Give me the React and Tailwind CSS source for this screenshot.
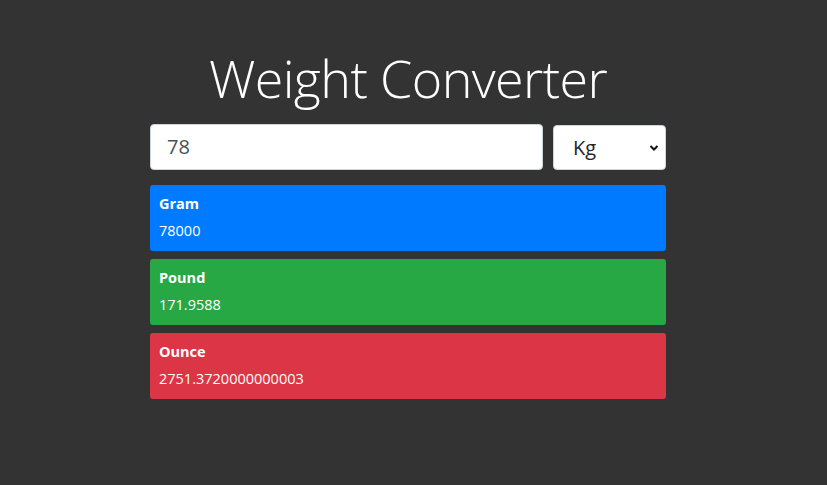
export default function App() {
  const cards = [
    { label: "Gram", value: "78000", bg: "bg-[#007bff]" },
    { label: "Pound", value: "171.9588", bg: "bg-[#28a745]" },
    { label: "Ounce", value: "2751.3720000000003", bg: "bg-[#dc3545]" },
  ];
  return (
    <div className="w-[827px] h-[485px] bg-[#333333] overflow-hidden" style={{ fontFamily: '"Open Sans", "Noto Sans", sans-serif' }}>
      <div className="w-[516px] ml-[150px] pt-[44px] flex flex-col">
        <h1 className="text-center text-white font-light text-[52px] leading-[68px] tracking-[-0.6px] h-[68px]">Weight Converter</h1>
        <div className="mt-[12px] flex gap-[10px] h-[46px]">
          <div className="flex-1 bg-white rounded-[4px] border border-[#ced4da] flex items-center pl-[16px] text-[20px] text-[#495057]">78</div>
          <div className="w-[113px] mt-[1px] bg-white rounded-[4px] border border-[#ced4da] flex items-center pl-[19px] pr-[6px] text-[20px] text-[#212529]">
            <span className="flex-1">Kg</span>
            <svg width="10" height="8" viewBox="0 0 10 8" className="mt-[1px]">
              <path d="M1.5 2 L5 5.5 L8.5 2" fill="none" stroke="#111" strokeWidth="2" />
            </svg>
          </div>
        </div>
        <div className="mt-[15px] flex flex-col gap-[8px]">
          {cards.map((c) => (
            <div key={c.label} className={`${c.bg} h-[66px] rounded-[3px] px-[9px] pt-[9px] text-white text-[14.5px]`}>
              <div className="font-bold leading-[20px]">{c.label}</div>
              <div className="mt-[7px] leading-[20px]">{c.value}</div>
            </div>
          ))}
        </div>
      </div>
    </div>
  );
}
